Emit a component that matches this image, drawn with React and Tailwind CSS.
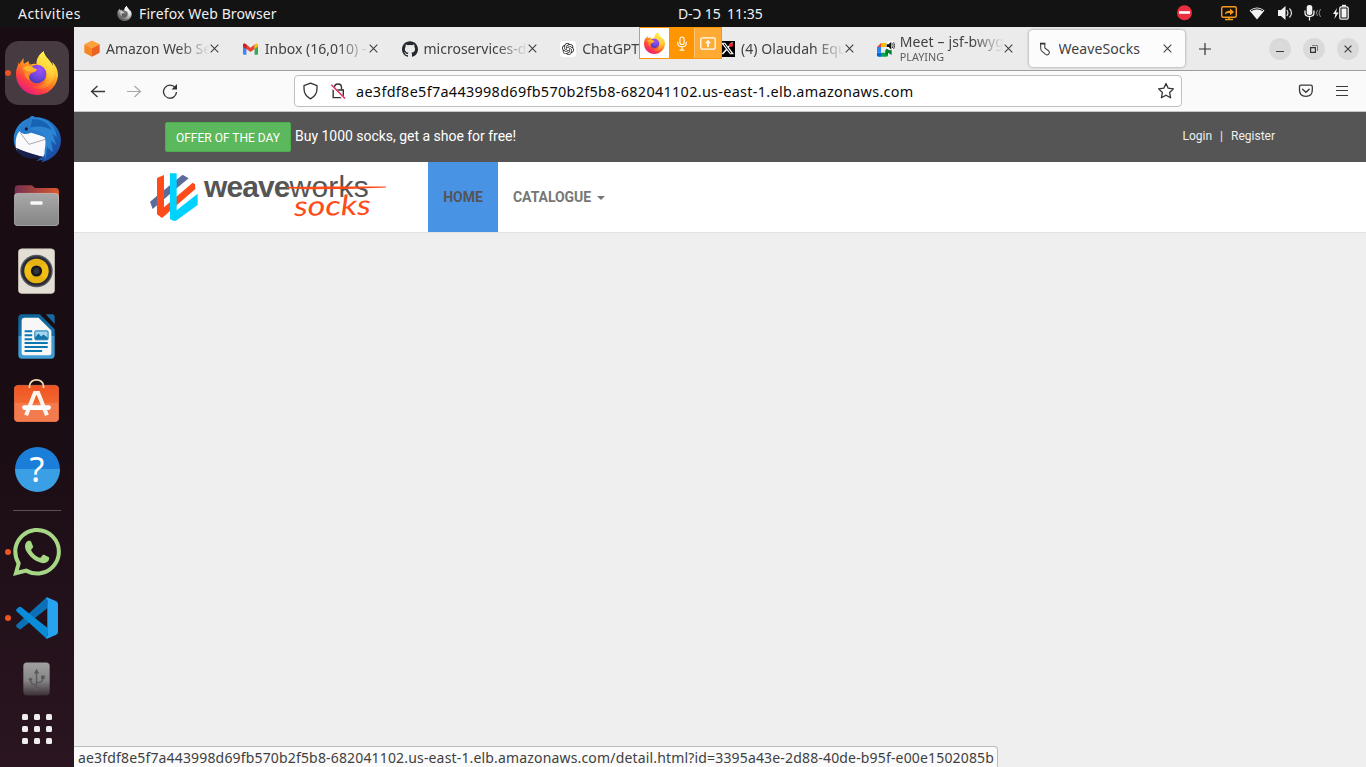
import { SiOpenai, SiGithub, SiX, SiWhatsapp } from "react-icons/si";

const ui = "font-['Noto_Sans',sans-serif]";

function FirefoxLogo({ className, id, mono }) {
  return (
    <svg viewBox="0 0 126 132" className={className} style={mono ? { filter: "grayscale(1) brightness(1.1)" } : undefined}>
      <defs>
        <linearGradient id={id + "a"} x1="0.85" y1="0.05" x2="0.25" y2="1">
          <stop offset="0" stopColor="#fff44f" />
          <stop offset="0.3" stopColor="#ffc82f" />
          <stop offset="0.5" stopColor="#ff8a1d" />
          <stop offset="0.75" stopColor="#ff4040" />
          <stop offset="1" stopColor="#e0188c" />
        </linearGradient>
        <radialGradient id={id + "b"} cx="0.65" cy="0.25" r="0.8">
          <stop offset="0" stopColor="#a04fff" />
          <stop offset="0.55" stopColor="#7346e0" />
          <stop offset="1" stopColor="#4a3ab0" />
        </radialGradient>
        <linearGradient id={id + "c"} x1="0.6" y1="0" x2="0.3" y2="1">
          <stop offset="0" stopColor="#fff44f" />
          <stop offset="0.45" stopColor="#ffd23a" />
          <stop offset="0.75" stopColor="#ff9a25" />
          <stop offset="1" stopColor="#ff5a33" />
        </linearGradient>
      </defs>
      <path d="M24 22C21 30 23 36 24 38L38 30C37 34 39 38 42 41C50 38 57 38 62 40C61 25 70 10 83 1C86 20 104 27 111 46L109 32C119 43 126 56 126 72C124 106 97 132 63 132C28 132 0 104 0 70C0 52 6 46 8 34L11 40C14 32 19 26 24 22Z" fill={`url(#${id}a)`} />
      <path d="M62 38C61 24 71 9 83 1C86 20 104 27 111 47C119 68 113 91 98 105C82 118 59 115 48 106C70 112 91 100 92 76C94 60 80 44 62 38Z" fill={`url(#${id}c)`} />
      <circle cx="63" cy="69" r="28" fill={`url(#${id}b)`} />
      <path d="M20 52C30 42 47 45 52 50C57 56 62 50 62 58C59 63 52 64 48 66C38 70 37 82 44 90C33 84 26 78 25 65C24 58 18 58 20 52Z" fill="#ff8a2a" />
      <path d="M20 52C30 42 47 45 52 50C57 56 62 50 62 58C54 65 43 62 35 61Z" fill="#ffb52b" />
    </svg>
  );
}

function Thunderbird() {
  return (
    <svg viewBox="0 0 144 144" className="size-12">
      <defs>
        <linearGradient id="tb" x1="0" y1="0" x2="1" y2="1">
          <stop offset="0" stopColor="#2b8fd9" />
          <stop offset="0.5" stopColor="#1c6fc4" />
          <stop offset="1" stopColor="#1b3f94" />
        </linearGradient>
      </defs>
      <path d="M50 8C54 2 62 2 66 7C100 4 144 32 144 76C144 112 116 136 84 142L90 134L70 138L82 128C50 132 20 125 8 100C-6 70 4 24 50 8Z" fill="url(#tb)" />
      <path d="M10 104C4 70 12 55 24 44L98 66C104 88 100 112 90 126L18 108Z" fill="#fafafc" />
      <path d="M22 54L48 88L100 72" fill="none" stroke="#a9a9b2" strokeWidth="3" />
      <path d="M20 50C26 28 38 12 56 9C78 8 96 30 98 68L56 50C48 58 32 60 20 50Z" fill="#2a7cca" />
      <path d="M56 9C88 4 124 22 132 66L118 56L130 90L114 76L120 112L102 96L98 134C88 102 104 92 94 64C84 46 66 48 50 38Z" fill="#2c84d2" />
      <path d="M58 12C88 12 110 26 116 46C98 34 78 32 52 38Z" fill="#1763b3" />
      <path d="M8 98C22 104 60 118 92 126C56 136 24 133 8 98Z" fill="#17204c" />
      <circle cx="40" cy="42" r="5" fill="#17204c" />
    </svg>
  );
}

function Files() {
  return (
    <svg viewBox="0 0 134 122" className="h-[41px] w-[45px]">
      <defs>
        <linearGradient id="fa"><stop offset="0" stopColor="#75304f" /><stop offset="1" stopColor="#dc572d" /></linearGradient>
        <linearGradient id="fb" x2="0" y2="1"><stop offset="0" stopColor="#a8a8a8" /><stop offset="1" stopColor="#858585" /></linearGradient>
      </defs>
      <path d="M2 12Q2 1 12 1H50Q55 1 58 5L63 9H124Q134 9 134 20V60H2Z" fill="url(#fa)" />
      <rect x="1" y="25" width="132" height="96" rx="10" fill="url(#fb)" stroke="#c8c8c8" strokeWidth="2" />
      <rect x="49" y="48" width="36" height="11" rx="3" fill="#f8f8f8" />
    </svg>
  );
}

function Rhythmbox() {
  return (
    <svg viewBox="0 0 112 138" className="h-[46px] w-[37px]">
      <rect x="1" y="2" width="110" height="135" rx="11" fill="#e3dfd4" stroke="#c9c4b7" strokeWidth="2" />
      <circle cx="56" cy="69" r="49" fill="#55565f" />
      <circle cx="56" cy="69" r="45" fill="#2b2c33" />
      <circle cx="56" cy="69" r="37" fill="#f1be15" />
      <path d="M56 69L29 44A37 37 0 0 1 83 44ZM56 69L29 94A37 37 0 0 0 83 94Z" fill="#d9a312" opacity="0.4" />
      <circle cx="56" cy="69" r="17" fill="#18191f" />
      <circle cx="56" cy="69" r="9" fill="#34363e" />
    </svg>
  );
}

function Writer() {
  return (
    <svg viewBox="0 0 112 136" className="h-[45px] w-[37px]">
      <defs><linearGradient id="wr" x2="0" y2="1"><stop offset="0" stopColor="#0f6398" /><stop offset="0.48" stopColor="#1372aa" /><stop offset="0.5" stopColor="#3a9bd0" /><stop offset="1" stopColor="#3f9fd5" /></linearGradient></defs>
      <path d="M12 1H66L111 46V124Q111 135 100 135H12Q1 135 1 124V12Q1 1 12 1Z" fill="url(#wr)" />
      <path d="M84 1H104Q111 1 111 9V30Z" fill="#176a9f" />
      <path d="M20 11H62L101 50V118Q101 125 94 125H18Q11 125 11 118V20Q11 11 20 11Z" fill="#f7f7f7" />
      <path d="M20 52H43M20 64H43M20 76H43M20 88H90M20 100H90M20 112H73" stroke="#0878b0" strokeWidth="6" />
      <rect x="51" y="51" width="40" height="27" rx="3" fill="#a5d5ee" stroke="#0878b0" strokeWidth="3" />
      <path d="M52 77V70L62 59L70 68L77 62L90 72V77Z" fill="#1574aa" />
    </svg>
  );
}

function Software() {
  return (
    <svg viewBox="0 0 134 128" className="h-[43px] w-[45px]">
      <defs><linearGradient id="sw" x2="0" y2="1"><stop offset="0" stopColor="#ef5322" /><stop offset="0.48" stopColor="#f36730" /><stop offset="0.5" stopColor="#f47a4c" /><stop offset="1" stopColor="#f37b4f" /></linearGradient></defs>
      <rect x="1" y="19" width="132" height="108" rx="11" fill="url(#sw)" stroke="#fa7d50" strokeWidth="2" />
      <path d="M46 27V22C46-4 88-4 88 22V27" fill="none" stroke="#f5dcb1" strokeWidth="5" />
      <path d="M36 108L62 42H72L98 108" fill="none" stroke="#fff5ef" strokeWidth="12" />
      <rect x="24" y="78" width="86" height="14" rx="7" fill="#fff" />
    </svg>
  );
}

function VSCode() {
  return (
    <svg viewBox="0 0 126 126" className="size-[42px]">
      <path d="M3 82L92 1L95 33L15 96Q12 98 8 95L1 89Q-1 85 3 82Z" fill="#0b70b6" />
      <path d="M3 44L92 125L95 93L15 30Q12 28 8 31L1 37Q-1 41 3 44Z" fill="#0a8cd8" />
      <path d="M93 1L121 13Q126 16 126 22V104Q126 110 121 113L93 125Q88 124 94 116V10Q88 2 93 1Z" fill="#27a2ef" />
    </svg>
  );
}

function Usb() {
  return (
    <svg viewBox="0 0 82 102" className="h-[34px] w-[27px]">
      <defs><linearGradient id="us" x2="0" y2="1"><stop offset="0" stopColor="#a0a0a0" /><stop offset="0.55" stopColor="#858585" /><stop offset="1" stopColor="#3b3037" /></linearGradient></defs>
      <rect x="1" y="1" width="80" height="100" rx="11" fill="url(#us)" />
      <g stroke="#5c585b" strokeWidth="4" fill="none"><path d="M41 30V80M41 70C22 66 23 60 23 53M41 63C60 60 60 54 60 47" /></g>
      <path d="M41 20L49 34H33Z" fill="#5c585b" /><circle cx="23" cy="52" r="5" fill="#5c585b" /><path d="M55 40h11v11h-11zM35 74h12v12H35z" fill="#5c585b" />
    </svg>
  );
}

function DockItem({ children, className, dot }) {
  return (
    <div className={"relative flex w-[74px] shrink-0 items-center justify-center " + className}>
      {dot && <span className="absolute left-[5px] top-1/2 -mt-[3px] size-[6px] rounded-full bg-[#e95420]" />}
      {children}
    </div>
  );
}

function Dock() {
  return (
    <aside className="flex w-[74px] shrink-0 flex-col items-center bg-linear-to-b from-[#190c13] from-50% to-[#2a1520] pt-[14px]">
      <DockItem className="h-16" dot>
        <div className="flex size-16 items-center justify-center rounded-[14px] bg-[#453b41]">
          <FirefoxLogo id="dock" className="h-[44px] w-[42px]" />
        </div>
      </DockItem>
      <DockItem className="mt-[10px] h-12"><Thunderbird /></DockItem>
      <DockItem className="mt-[22px] h-[41px] pr-px"><Files /></DockItem>
      <DockItem className="mt-[22px] h-[46px] pr-px"><Rhythmbox /></DockItem>
      <DockItem className="mt-5 h-[45px] pr-px"><Writer /></DockItem>
      <DockItem className="mt-5 h-[43px] pr-px"><Software /></DockItem>
      <DockItem className="mt-6 h-[46px]">
        <div className={"flex size-[45px] items-center justify-center rounded-full bg-linear-to-b from-[#1b7ed9] from-50% to-[#3a9fe5] to-50% text-[34px] leading-none text-white " + ui}>?</div>
      </DockItem>
      <div className="mt-[18px] h-px w-12 shrink-0 bg-[#5a5156]" />
      <DockItem className="mt-[17px] h-12" dot><SiWhatsapp className="size-12 text-[#a5d785]" /></DockItem>
      <DockItem className="mt-[21px] h-[42px]" dot><VSCode /></DockItem>
      <DockItem className="mt-[23px] h-[34px] pr-px"><Usb /></DockItem>
      <div className="mt-[18px] grid grid-cols-3 gap-[6px]">
        {[0, 1, 2, 3, 4, 5, 6, 7, 8].map((n) => <span key={n} className="size-[6px] rounded-[1.5px] bg-[#efedee]" />)}
      </div>
    </aside>
  );
}

function TopBar() {
  return (
    <header className={"flex h-[27px] shrink-0 items-center bg-[#131313] text-[14px] leading-[27px] text-[#f0f0f0] " + ui}>
      <span className="ml-[18px] w-[99px] whitespace-nowrap tracking-[0.45px]">Activities</span>
      <FirefoxLogo id="top" mono className="mr-[7px] size-[15px]" />
      <span className="w-[539px] whitespace-nowrap tracking-[0.12px]">Firefox Web Browser</span>
      <span className="w-[49px] whitespace-nowrap tracking-[-0.1px]">D-Ɔ 15</span>
      <span className="whitespace-nowrap">11:35</span>
      <svg className="ml-auto mr-[14px] h-[27px] w-[175px] shrink-0" viewBox="1177 0 175 27">
        <circle cx="1184.5" cy="12.7" r="7.5" fill="#e92f40" /><path d="M1179 12.5h11" stroke="#fff" strokeWidth="2.6" />
        <rect x="1221.7" y="6.7" width="14.6" height="10.6" rx="1.5" fill="none" stroke="#f79a1c" strokeWidth="1.4" />
        <path d="M1229 17v2m-4 .5h8" stroke="#f79a1c" strokeWidth="1.5" /><path d="M1225 14.5C1225 11.5 1227 10.7 1230 10.7V8.5L1234 12L1230 15.3V13C1228 13 1226 13 1225 14.5Z" fill="#f79a1c" />
        <path d="M1249.5 10.5Q1257 4.5 1264.5 10.5L1257 19.5Z" fill="#f2f2f2" /><path d="M1251 10.8Q1257 7 1263 10.8" stroke="#131313" strokeWidth="1" fill="none" />
        <path d="M1278 10h3l4.5-4v14l-4.5-4h-3z" fill="#f2f2f2" /><path d="M1286.8 10q2.2 3 0 6M1289.5 8.5q4 4.5 0 9" stroke="#ddd" strokeWidth="1.2" fill="none" />
        <rect x="1306.7" y="5" width="5.6" height="10" rx="2.5" fill="#f2f2f2" /><path d="M1305 10.5v2q0 4 4.5 4t4.5-4v-2M1309.5 16v4.5" stroke="#f2f2f2" strokeWidth="1.3" fill="none" />
        <path d="M1317.5 10q-2 3 0 6M1320.5 9q-3 4 0 8" stroke="#8b8b8b" strokeWidth="1" fill="none" />
        <path d="M1337 8l-4 6h2.4l-1 5 4.3-6.5h-2.6z" fill="#f2f2f2" /><rect x="1339.8" y="6.8" width="8.4" height="12.4" rx="1.4" fill="none" stroke="#f2f2f2" strokeWidth="1.3" /><rect x="1341.5" y="8.5" width="5" height="9" fill="#f2f2f2" /><path d="M1342 5.6h4" stroke="#f2f2f2" strokeWidth="1.6" />
      </svg>
    </header>
  );
}

const Cross = ({ className = "size-[9px]", w = 1.1 }) => (
  <svg viewBox="0 0 9 9" className={className}><path d="M.7.7l7.6 7.6M8.3.7L.7 8.3" stroke="#3f3f3f" strokeWidth={w} /></svg>
);

function Cube() {
  return <svg viewBox="0 0 48 50" className="h-[17px] w-4"><path d="M24 1L47 12L24 24L1 12Z" fill="#fba13a" /><path d="M1 12L24 24V50L1 38Z" fill="#f6861f" /><path d="M47 12L24 24V50L47 38Z" fill="#ec6220" /></svg>;
}
function Gmail() {
  return <svg viewBox="0 0 44 34" className="h-3 w-[15px]"><path d="M0 6L10 12V34H3Q0 34 0 31Z" fill="#4285f4" /><path d="M44 6L34 12V34H41Q44 34 44 31Z" fill="#34a853" /><path d="M0 7Q0-4 10 4L22 13L34 4V17L22 26L10 17L0 10Z" fill="#ea4335" /><path d="M0 7Q0-4 10 4V17L0 10Z" fill="#c5221f" /><path d="M34 4Q44-4 44 7V10L34 17Z" fill="#fbbc04" /></svg>;
}
function Meet() {
  return (
    <svg viewBox="0 0 54 48" className="h-4 w-[18px] shrink-0">
      <path d="M0 18L12 6V18Z" fill="#ea4335" /><path d="M12 6H33V18H12Z" fill="#fbbc04" /><path d="M0 18H12V35H0Z" fill="#2684fc" /><path d="M0 35H12V47H4Q0 47 0 43Z" fill="#0066da" /><path d="M12 35H25L33 26V43Q33 47 29 47H12Z" fill="#00ac47" /><path d="M25 27L44 12V42L33 35V43H25Z" fill="#00832d" />
      <circle cx="41" cy="14" r="14" fill="#fff" /><path d="M29 10h6l8-8v24l-8-8h-6z" fill="#111" /><path d="M46 7q5 7 0 14M50 4q6 10 0 20" stroke="#111" strokeWidth="2.5" fill="none" />
    </svg>
  );
}
function Sock() {
  return <svg viewBox="0 0 12 14" className="h-[14px] w-3"><path d="M1.5 1.5H5.8V6L9.8 9Q11 10.7 9.6 12.2Q8 13.4 6.6 12.4L2.6 8.8Q1.6 7.8 1.8 6.2Z" fill="none" stroke="#444" strokeWidth="1.1" /><path d="M1 .7h5.2v1.8H1z" fill="#333" /></svg>;
}

const tabs = [
  { t: "Amazon Web Services", icon: <Cube />, cls: "tracking-[-0.05px]" },
  { t: "Inbox (16,010) - mail", icon: <Gmail />, cls: "" },
  { t: "microservices-demo", icon: <SiGithub className="size-4 text-[#24292f]" />, cls: "" },
  { t: "ChatGPT", icon: <span className="flex size-4 items-center justify-center rounded-[3px] bg-white"><SiOpenai className="size-3 text-[#222]" /></span>, cls: "" },
  { t: "(4) Olaudah Equiano", icon: <span className="relative flex size-4 items-center justify-center bg-black"><SiX className="size-[13px] text-white" /><i className="absolute right-[2px] top-[2px] size-1 rounded-full bg-[#f91f2f]" /></span>, cls: "tracking-[0.05px]" },
  { t: "Meet – jsf-bwyg-abc", sub: "PLAYING", icon: <Meet />, cls: "tracking-[0.12px]" },
  { t: "WeaveSocks", icon: <Sock />, cls: "tracking-[0.1px]", active: true },
];

function Tab({ tab }) {
  return (
    <div className={"relative flex h-[37px] w-[156px] shrink-0 items-center rounded-[4px] pl-2 " + (tab.active ? "bg-[#fcfcfc] shadow-[0_0_3px_rgba(0,0,0,0.4)]" : "")}>
      <span className="flex w-4 shrink-0 justify-center">{tab.icon}</span>
      <div className={"ml-[6px] w-[104px] overflow-hidden whitespace-nowrap " + (tab.active ? "" : "mask-r-from-70% mask-r-to-100%")}>
        <div className={"text-[14px] text-[#414141] " + (tab.sub ? "leading-[17px] " : "leading-[22px] ") + tab.cls}>{tab.t}</div>
        {tab.sub && <div className="text-[10.8px] leading-[14px] text-[#5c5c5c]">{tab.sub}</div>}
      </div>
      <span className="ml-auto mr-[13px]"><Cross /></span>
    </div>
  );
}

function TabBar() {
  return (
    <div className={"relative flex h-[44px] shrink-0 items-start border-b border-[#9f9fa2] bg-[#ebebeb] pl-[2px] pt-[3px] " + ui}>
      <div className="flex gap-[2.75px]">{tabs.map((t) => <Tab key={t.t} tab={t} />)}</div>
      <svg viewBox="0 0 12 12" className="ml-[14.5px] mt-[13px] size-3"><path d="M6 0v12M0 6h12" stroke="#333" strokeWidth="1.2" /></svg>
      <div className="ml-auto mr-[7px] mt-2 flex gap-3">
        <span className="flex size-[22px] items-center justify-center rounded-full bg-[#dadada]"><i className="mt-[5px] h-[1.5px] w-2 bg-[#3a3a3a]" /></span>
        <span className="flex size-[22px] items-center justify-center rounded-full bg-[#dadada]"><svg viewBox="0 0 8 8" className="size-2"><path d="M.6 2.6h4.8v4.8H.6z" stroke="#333" fill="none" strokeWidth="1.2" /><path d="M2 .5h5.5V6" stroke="#777" fill="none" strokeWidth=".9" /></svg></span>
        <span className="flex size-[22px] items-center justify-center rounded-full bg-[#dadada]"><Cross className="size-2" w={1.4} /></span>
      </div>
      <div className="absolute left-[565px] top-0 flex h-8 w-[83px] border border-[#ff9500] bg-[#ff9500]">
        <span className="flex w-[29px] items-center justify-center bg-white"><FirefoxLogo id="share" className="h-[22px] w-[21px]" /></span>
        <span className="flex w-[25px] items-center justify-center"><svg viewBox="0 0 12 16" className="h-[15px] w-3"><rect x="3.8" y="1" width="4.4" height="8" rx="2.2" fill="none" stroke="#fff" strokeWidth="1.2" /><path d="M1.5 6v1.5q0 4 4.5 4t4.5-4V6M6 11.5V15M3.5 15h5" fill="none" stroke="#fff" strokeWidth="1.2" /></svg></span>
        <span className="flex flex-1 items-center justify-center border-l border-[#ffc478] bg-[#ffaa33]"><svg viewBox="0 0 16 13" className="h-[13px] w-4"><rect x=".8" y=".8" width="14.4" height="11.4" rx="1.6" fill="none" stroke="#fff" strokeWidth="1.3" /><path d="M8 2.8L11 6.3H8.9V10H7.1V6.3H5Z" fill="#fff" /></svg></span>
      </div>
    </div>
  );
}

function Toolbar() {
  return (
    <div className={"flex h-[41px] shrink-0 items-center border-b border-[#c4c8c8] bg-[#fafafa] " + ui}>
      <svg viewBox="0 0 90 16" className="ml-[16px] h-4 w-[90px]">
        <path d="M15 8.5H1.5M7.5 3L1.5 8.5L7.5 14" fill="none" stroke="#383838" strokeWidth="1.3" />
        <path d="M37 8.5H50.5M44.5 3L50.5 8.5L44.5 14" fill="none" stroke="#a8a8a8" strokeWidth="1.2" />
        <path d="M85.5 5.2A6.5 6.5 0 1 0 86.5 9" fill="none" stroke="#333" strokeWidth="1.3" /><path d="M87 1V6.5H81.5Z" fill="#333" />
      </svg>
      <div className="ml-[114px] flex h-8 w-[888px] items-center rounded-[4px] border border-[#bfbfc2] bg-white">
        <svg viewBox="0 0 46 18" className="ml-[7px] h-[18px] w-[46px]">
          <path d="M8.5 1.2L15 3.6V6.5C15 11.5 12.5 14.8 8.5 16.8C4.5 14.8 2 11.5 2 6.5V3.6Z" fill="none" stroke="#333" strokeWidth="1.3" strokeLinejoin="round" />
          <path d="M32.5 8V5.5Q32.5 2 36 2T39.5 5.5V8M31.2 8H41.3V15.6H31.2Z" fill="none" stroke="#333" strokeWidth="1.4" /><path d="M29 3.5L42 16.5" stroke="#fff" strokeWidth="3" /><path d="M29.3 2.8L43 16.5" stroke="#e8215b" strokeWidth="1.4" />
        </svg>
        <span className="ml-[8px] mt-px whitespace-nowrap text-[14.4px] leading-5 tracking-[0.32px] text-[#0c0c0d]">ae3fdf8e5f7a443998d69fb570b2f5b8-682041102.us-east-1.elb.amazonaws.com</span>
        <svg viewBox="0 0 18 18" className="ml-auto mr-[6px] size-[18px]"><path d="M9 1.5L11.2 6.2L16.4 6.9L12.6 10.5L13.6 15.8L9 13.2L4.4 15.8L5.4 10.5L1.6 6.9L6.8 6.2Z" fill="none" stroke="#333" strokeWidth="1.3" strokeLinejoin="round" /></svg>
      </div>
      <svg viewBox="0 0 52 14" className="ml-auto mr-[16px] h-[14px] w-[52px]">
        <path d="M3 1.2H12.8Q14.3 1.2 14.3 2.7V6Q14.3 12.3 7.9 12.3T1.5 6V2.7Q1.5 1.2 3 1.2Z" fill="none" stroke="#3a3a3a" strokeWidth="1.3" /><path d="M4.6 5.2L7.9 8.3L11.2 5.2" fill="none" stroke="#3a3a3a" strokeWidth="1.4" strokeLinecap="round" />
        <path d="M38 2.5H50M38 6.5H50M38 11.5H50" stroke="#3a3a3a" strokeWidth="1.2" />
      </svg>
    </div>
  );
}

function WeaveLogo() {
  return (
    <div className="relative ml-[76px] h-[70px] w-[278px]">
      <svg viewBox="0 0 144 146" className="absolute left-0 top-[10.5px] h-[48.7px] w-12">
        <path d="M0 86L94 8Q98 4 103 8L116 16L80 46L8 108Z" fill="#5b6b9b" />
        <path d="M21 15L42 6V103L128 29L135 34L136 48L36 135L21 124Z" fill="#ff4b19" />
        <path d="M60 1H80V112L143 62V96L80 142Q74 147 60 138Z" fill="#00d2ff" />
      </svg>
      <span className="absolute left-[54px] top-[7px] whitespace-nowrap font-['Liberation_Sans',sans-serif] text-[30px] font-normal leading-9 text-[#555]"><b className="tracking-[-0.9px]">weave</b><span className="tracking-[0.2px]">works</span></span>
      <span className="absolute left-[144px] top-[25px] origin-left -rotate-1 scale-x-122 font-['Lato',sans-serif] text-[28px] font-normal italic leading-9 text-[#ff4b19]">socks</span>
      <svg viewBox="0 0 100 5" className="absolute left-[137px] top-[23px] h-[5px] w-[100px]"><path d="M0 2.6L40 2L99 2L60 3.5L20 3.6Z" stroke="#ff4b19" strokeWidth="1.2" fill="#ff4b19" /></svg>
    </div>
  );
}

function Site() {
  return (
    <main className="relative flex flex-1 flex-col bg-[#efefef] font-['Roboto',sans-serif]">
      <div className="flex h-[50px] shrink-0 items-center bg-[#555] text-[14px] text-white">
        <span className="ml-[91px] flex h-[30px] w-[126px] items-center justify-center rounded-[2px] border border-[#4cae4c] bg-[#5cb85c] pt-px text-[12px]">OFFER OF THE DAY</span>
        <span className="ml-1 -mt-px whitespace-nowrap tracking-[-0.02px]">Buy 1000 socks, get a shoe for free!</span>
        <div className="ml-auto mr-[91px] -mt-[2px] flex gap-2 text-[12px] text-[#eee]"><span>Login</span><span>|</span><span>Register</span></div>
      </div>
      <nav className="flex h-[71px] shrink-0 border-b border-[#e2e2e2] bg-white text-[14px] font-bold">
        <WeaveLogo />
        <span className="flex h-[70px] w-[70px] items-center justify-center bg-[#4993e4] text-[#555]">HOME</span>
        <span className="flex h-[70px] items-center px-[15px] tracking-[-0.05px] text-[#777]">CATALOGUE<i className="ml-[5.5px] mt-[2px] border-x-4 border-t-4 border-x-transparent border-t-[#777]" /></span>
      </nav>
      <div className={"mt-auto flex h-[21px] w-[924px] items-center overflow-hidden whitespace-nowrap rounded-tr-[4px] border-r border-t border-[#bdbdbd] bg-[#fafafa] pl-1 text-[14px] tracking-[0.165px] text-[#3f3f3f] " + ui}>ae3fdf8e5f7a443998d69fb570b2f5b8-682041102.us-east-1.elb.amazonaws.com/detail.html?id=3395a43e-2d88-40de-b95f-e00e1502085b</div>
    </main>
  );
}

export default function App() {
  return (
    <div className="flex h-[767px] w-[1366px] flex-col overflow-hidden">
      <TopBar />
      <div className="flex min-h-0 flex-1">
        <Dock />
        <div className="flex min-w-0 flex-1 flex-col">
          <TabBar />
          <Toolbar />
          <Site />
        </div>
      </div>
    </div>
  );
}
